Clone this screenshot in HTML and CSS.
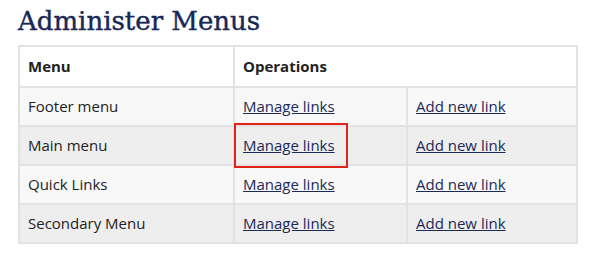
FILE: index.html
```html
<!DOCTYPE html>
<html lang="en">
<head>
<meta charset="UTF-8">
<meta name="viewport" content="width=device-width, initial-scale=1.0">
<title>Administer Menus</title>
<link rel="stylesheet" href="styles.css">
</head>
<body>
<div class="page">
  <h1 class="page-title">Administer Menus</h1>
  <table class="menu-table">
    <thead>
      <tr>
        <th class="col-menu">Menu</th>
        <th colspan="2">Operations</th>
      </tr>
    </thead>
    <tbody>
      <tr>
        <td>Footer menu</td>
        <td class="col-op"><a href="#">Manage links</a></td>
        <td><a href="#">Add new link</a></td>
      </tr>
      <tr>
        <td>Main menu</td>
        <td class="col-op highlight"><a href="#">Manage links</a></td>
        <td><a href="#">Add new link</a></td>
      </tr>
      <tr>
        <td>Quick Links</td>
        <td class="col-op"><a href="#">Manage links</a></td>
        <td><a href="#">Add new link</a></td>
      </tr>
      <tr>
        <td>Secondary Menu</td>
        <td class="col-op"><a href="#">Manage links</a></td>
        <td><a href="#">Add new link</a></td>
      </tr>
    </tbody>
  </table>
</div>
</body>
</html>
```

FILE: styles.css
```css
body {
  margin: 0;
  background: #fff;
  font-family: 'Open Sans', sans-serif;
  color: #222;
}
.page {
  padding: 0 22px 0 18px;
}
.page-title {
  margin: 0;
  padding: 5px 0 8px;
  font-family: 'DejaVu Serif', serif;
  font-weight: normal;
  font-size: 26px;
  line-height: 32px;
  color: #172756;
  -webkit-text-stroke: 0.4px #172756;
}
.menu-table {
  width: 100%;
  border-collapse: collapse;
  font-size: 15px;
  line-height: 21px;
}
.menu-table th,
.menu-table td {
  border: 2px solid #e2e2e2;
  padding: 8px 8px;
  text-align: left;
}
.menu-table th {
  background: #fff;
  font-weight: bold;
  padding: 9px 8px;
}
.col-menu {
  width: 197px;
}
.col-op {
  width: 155px;
}
.menu-table tbody tr:nth-child(odd) {
  background: #f8f8f8;
}
.menu-table tbody tr:nth-child(even) {
  background: #eeeeee;
}
.menu-table a {
  color: #1b2a57;
  text-decoration: underline;
}
.highlight {
  position: relative;
}
.highlight::after {
  content: '';
  position: absolute;
  left: -1px;
  top: -4px;
  width: 110px;
  height: 41px;
  border: 2px solid #e0231a;
}
```
